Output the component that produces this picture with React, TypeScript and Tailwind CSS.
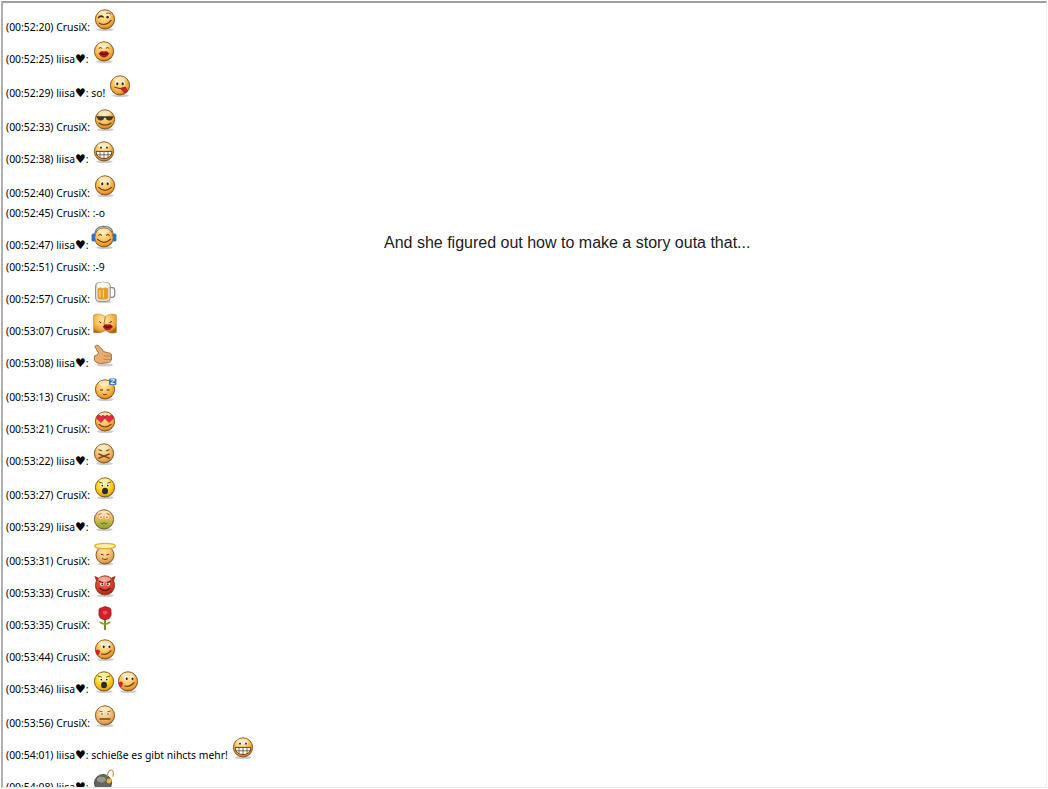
import type { ReactNode } from "react";

type Tone = "orange" | "yellow" | "red" | "sick" | "pale";

const faceFill: Record<Tone, string> = {
  orange: "url(#face-orange)",
  yellow: "url(#face-yellow)",
  red: "url(#face-red)",
  sick: "url(#face-sick)",
  pale: "url(#face-pale)",
};

function Gradients() {
  const stops: [string, string[]][] = [
    ["face-orange", ["#ffeaa8", "#fcc868", "#ec9a30", "#a5661c"]],
    ["face-yellow", ["#fff59a", "#ffdf2c", "#f2ae14", "#a06e12"]],
    ["face-red", ["#f58a70", "#e04c38", "#c52a22", "#7a1c16"]],
    ["face-pale", ["#fce2aa", "#f6c880", "#e49e52", "#a06c30"]],
  ];
  return (
    <svg className="absolute h-0 w-0" aria-hidden="true">
      <defs>
        {stops.map(([id, c]) => (
          <radialGradient key={id} id={id} cx="45%" cy="32%" r="70%">
            <stop offset="0%" stopColor={c[0]} />
            <stop offset="45%" stopColor={c[1]} />
            <stop offset="82%" stopColor={c[2]} />
            <stop offset="100%" stopColor={c[3]} />
          </radialGradient>
        ))}
        <linearGradient id="face-sick" x1="0" y1="0" x2="0" y2="1">
          <stop offset="0%" stopColor="#fbd898" />
          <stop offset="42%" stopColor="#f0b868" />
          <stop offset="64%" stopColor="#b4bc48" />
          <stop offset="100%" stopColor="#8c9a30" />
        </linearGradient>
      </defs>
    </svg>
  );
}

function Face({ tone = "orange", children }: { tone?: Tone; children?: ReactNode }) {
  return (
    <>
      <ellipse cx="11.4" cy="20.6" rx="8.4" ry="1.5" fill="#000" opacity="0.2" />
      <circle cx="11" cy="10.4" r="9.6" fill={faceFill[tone]} stroke="#7c4f18" strokeWidth="0.9" />
      <ellipse cx="10.6" cy="4.2" rx="6" ry="2.6" fill="#fff" opacity="0.42" />
      {children}
    </>
  );
}

const Eyes = () => (
  <>
    <ellipse cx="8" cy="8.2" rx="1.8" ry="2.4" fill="#fff" />
    <ellipse cx="14" cy="8.2" rx="1.8" ry="2.4" fill="#fff" />
    <ellipse cx="8.3" cy="8.7" rx="1.1" ry="1.5" fill="#3c2208" />
    <ellipse cx="13.7" cy="8.7" rx="1.1" ry="1.5" fill="#3c2208" />
  </>
);

const Smile = () => (
  <path d="M4.6 12.4Q11 18.4 17.4 12.4" fill="none" stroke="#6c3e10" strokeWidth="1.2" strokeLinecap="round" />
);

const Teeth = () => (
  <>
    <path d="M3 10.4H19Q18.4 17.4 11 17.6Q3.6 17.4 3 10.4Z" fill="#fff" stroke="#5c3410" strokeWidth="0.9" />
    <path d="M3.2 13.8H18.8M7 10.6V16.8M11 10.6V17.4M15 10.6V16.8" stroke="#5c3410" strokeWidth="0.7" fill="none" />
  </>
);

const Lips = ({ x = 11, y = 13.2, s = 1 }: { x?: number; y?: number; s?: number }) => (
  <g transform={`translate(${x} ${y}) scale(${s})`}>
    <path d="M-4.8 0Q-2.8 -3 0 -1.8Q2.8 -3 4.8 0Q2.8 3.6 0 3.4Q-2.8 3.6 -4.8 0Z" fill="#c0141e" stroke="#6c0a0e" strokeWidth="0.4" />
    <path d="M-3.6 0.1Q0 1.2 3.6 0.1" stroke="#3c0406" strokeWidth="0.9" fill="none" />
  </g>
);

const icons: Record<string, ReactNode> = {
  wink: (
    <Face>
      <path d="M4.6 8.6Q6.8 6 9.2 8" fill="none" stroke="#4a2a0c" strokeWidth="1.5" strokeLinecap="round" />
      <ellipse cx="14" cy="7.8" rx="1.9" ry="2.3" fill="#fff" />
      <ellipse cx="13.6" cy="8.2" rx="1.2" ry="1.4" fill="#3c2208" />
      <path d="M12 4.4Q14.5 3.2 17 5" fill="none" stroke="#6c3e10" strokeWidth="0.8" />
      <path d="M5.4 14.2Q11.6 17.8 17 11.4" fill="none" stroke="#6c3e10" strokeWidth="1.2" strokeLinecap="round" />
    </Face>
  ),
  kiss: (
    <Face>
      <path d="M5.8 7.4Q7.6 5.6 9.2 7.4M12.8 7.4Q14.4 5.6 16.2 7.4" fill="none" stroke="#6c3e10" strokeWidth="1" />
      <Lips y={12.6} s={1.05} />
    </Face>
  ),
  tongue: (
    <Face>
      <Eyes />
      <path d="M5.4 12.2Q11 14.8 16.6 12.4" fill="none" stroke="#6c3e10" strokeWidth="1" />
      <path d="M11.5 13.4L16.6 12.4L18.6 15.6Q17.4 18 15 17.6Z" fill="#d8202c" stroke="#8c1018" strokeWidth="0.5" />
    </Face>
  ),
  shades: (
    <Face>
      <path d="M1.6 7.2H20.4L19 8.6Q18 11.8 15 11.6Q12.2 11.4 11.6 8.8H10.4Q9.8 11.4 7 11.6Q4 11.8 3 8.6Z" fill="#3a3a34" />
      <path d="M5 14Q11 18.2 17 14" fill="none" stroke="#6c3e10" strokeWidth="1.2" strokeLinecap="round" />
    </Face>
  ),
  grin: (
    <Face>
      <ellipse cx="8" cy="6.2" rx="1.5" ry="2" fill="#fff" />
      <ellipse cx="14" cy="6.2" rx="1.5" ry="2" fill="#fff" />
      <ellipse cx="8" cy="6.6" rx="0.9" ry="1.2" fill="#3c2208" />
      <ellipse cx="14" cy="6.6" rx="0.9" ry="1.2" fill="#3c2208" />
      <Teeth />
    </Face>
  ),
  smile: (
    <Face>
      <Eyes />
      <Smile />
    </Face>
  ),
  headphones: (
    <>
      <Face>
        <path d="M5.4 8.4Q7.2 6.6 9 8.4M13 8.4Q14.8 6.6 16.6 8.4" fill="none" stroke="#4a2a0c" strokeWidth="1" />
        <Smile />
      </Face>
      <path d="M1.6 9Q1.6 -0.6 11 -0.6Q20.4 -0.6 20.4 9" fill="none" stroke="#6c7884" strokeWidth="1.2" />
      <rect x="-1.4" y="6.6" width="3.6" height="8" rx="1.6" fill="#2a72c8" />
      <rect x="19.8" y="6.6" width="3.6" height="8" rx="1.6" fill="#2a72c8" />
    </>
  ),
  beer: (
    <>
      <ellipse cx="10" cy="20.8" rx="8" ry="1.2" fill="#000" opacity="0.18" />
      <path d="M15.5 6.6H18.6Q20.8 6.8 20.8 10V13.6Q20.8 16.4 18 16.4H15.5" fill="#fff" stroke="#8c8c82" strokeWidth="1.3" />
      <rect x="1.6" y="1.6" width="14.6" height="18.8" rx="3.4" fill="#ece8da" stroke="#8c8c82" strokeWidth="1" />
      <rect x="3.6" y="6.4" width="10.6" height="12" rx="1.8" fill="#e89c20" />
      <path d="M2.4 6Q2.4 1 6 1.6Q9 0 12 1.6Q16 1.6 16 6Q13.4 8.4 11 6.6Q8.6 8.6 6.6 6.6Q4.4 8.2 2.4 6Z" fill="#fbf9ef" stroke="#aaa89a" strokeWidth="0.5" />
      <path d="M6 9V16.4M9.4 9V16.4" stroke="#fcd884" strokeWidth="1.2" />
    </>
  ),
  couple: (
    <>
      <path d="M-0.4 2Q5.4 -0.6 11.4 3.6Q16.4 -0.4 22.4 2V19.6Q16.6 21.4 11.6 17.4Q6 21 -0.4 19.6Z" fill="url(#face-orange)" stroke="#a87a30" strokeWidth="0.5" />
      <path d="M11.4 3.6Q8.6 10 11.6 17.4" stroke="#8a5c20" strokeWidth="0.8" fill="none" />
      <path d="M5.2 8.6L7.2 10M15.6 9.8L17.8 8.4" stroke="#4a2a0c" strokeWidth="1" />
      <Lips x={13.8} y={13.6} s={1} />
    </>
  ),
  thumb: (
    <>
      <ellipse cx="11.6" cy="20" rx="8.4" ry="1.6" fill="#000" opacity="0.2" />
      <path d="M1.4 11Q4.8 10.4 5.6 8L1.8 1.6Q3.2 -0.6 5.6 0.8Q8.8 3.4 10.6 6.6L16.8 8.2Q19.4 9 18.4 11.4L18.6 14Q18.2 17 15.4 17.6L7.6 18.6Q3.8 18.4 1.4 15.6Z" fill="#e8ac70" stroke="#9c6430" strokeWidth="0.9" />
      <path d="M11 11H18M10.6 14.4H18" stroke="#b07238" strokeWidth="0.7" fill="none" />
    </>
  ),
  sleep: (
    <>
      <Face>
        <path d="M6 11H9M12.6 11H15.6" stroke="#4a2a0c" strokeWidth="1" />
        <path d="M9 15.2Q11 16.2 13 15.2" fill="none" stroke="#6c3e10" strokeWidth="0.9" />
      </Face>
      <rect x="15" y="-0.6" width="7.4" height="6.6" rx="1" fill="#3a76c8" />
      <path d="M16.8 0.8H20.6L16.8 4.6H20.6" stroke="#fff" strokeWidth="1" fill="none" />
    </>
  ),
  hearts: (
    <Face>
      <path d="M7 11.6L2.8 7.6Q2 4.4 4.8 4.2Q6.4 4.2 7 5.6Q7.8 4.2 9.2 4.4Q11.6 4.8 10.8 7.6Z" fill="#e8283c" stroke="#8c1820" strokeWidth="0.5" />
      <path d="M15 11.6L11.2 7.6Q10.4 4.4 13 4.2Q14.4 4.2 15 5.6Q15.8 4.2 17.2 4.4Q19.8 4.8 19.2 7.6Z" fill="#e8283c" stroke="#8c1820" strokeWidth="0.5" />
      <path d="M5 13.4Q11 18.6 17 13.4" fill="none" stroke="#6c3e10" strokeWidth="1.2" strokeLinecap="round" />
    </Face>
  ),
  sealed: (
    <Face tone="pale">
      <path d="M5.6 6.8L9 7.8M16.4 6.8L13 7.8" stroke="#6c3e10" strokeWidth="1" />
      <path d="M5.4 10.8L16.6 15.4M16.6 10.8L5.4 15.4" stroke="#6c3e10" strokeWidth="1.4" />
    </Face>
  ),
  shocked: (
    <Face tone="yellow">
      <path d="M4.8 4.8L9 6.4M17.2 4.8L13 6.4" stroke="#7a4a10" strokeWidth="1" />
      <ellipse cx="8" cy="8.4" rx="1.9" ry="1.8" fill="#fff" />
      <ellipse cx="14" cy="8.4" rx="1.9" ry="1.8" fill="#fff" />
      <circle cx="8.3" cy="8.6" r="0.9" fill="#222" />
      <circle cx="13.7" cy="8.6" r="0.9" fill="#222" />
      <ellipse cx="11" cy="14" rx="3" ry="3.2" fill="#2c2c2c" />
    </Face>
  ),
  sick: (
    <Face tone="sick">
      <ellipse cx="8" cy="7.8" rx="1.8" ry="1.9" fill="#fff" />
      <ellipse cx="14" cy="7.8" rx="1.8" ry="1.9" fill="#fff" />
      <circle cx="8" cy="8.2" r="0.9" fill="#e06a20" />
      <circle cx="14" cy="8.2" r="0.9" fill="#e06a20" />
      <path d="M5.4 5.6L8.4 4.4M16.6 5.6L13.6 4.4" stroke="#e05a18" strokeWidth="1" />
      <path d="M8 14.8Q11 13 14 14.8" fill="none" stroke="#5c6418" strokeWidth="1" />
    </Face>
  ),
  angel: (
    <>
      <ellipse cx="11.4" cy="21" rx="8" ry="1.4" fill="#000" opacity="0.2" />
      <circle cx="11" cy="12" r="9" fill="url(#face-pale)" stroke="#7c4f18" strokeWidth="0.9" />
      <path d="M6.8 11.2L9.6 12M15.2 11.2L12.4 12" stroke="#5c3410" strokeWidth="1" />
      <path d="M8 15.6Q11 17.6 14 15.6" fill="none" stroke="#6c3e10" strokeWidth="0.9" />
      <ellipse cx="11" cy="3" rx="10.4" ry="2.6" fill="#fff2b8" stroke="#eead28" strokeWidth="1.4" />
    </>
  ),
  devil: (
    <>
      <path d="M2.6 7.6L0.4 0.8L7 4M19.4 7.6L21.6 0.8L15 4Z" fill="#b82a20" />
      <Face tone="red">
        <ellipse cx="7.8" cy="9" rx="1.9" ry="1.8" fill="#fff" />
        <ellipse cx="14.2" cy="9" rx="1.9" ry="1.8" fill="#fff" />
        <circle cx="8.2" cy="9.2" r="0.9" fill="#521" />
        <circle cx="13.8" cy="9.2" r="0.9" fill="#521" />
        <path d="M5 6.2L9.2 7.8M17 6.2L12.8 7.8" stroke="#601410" strokeWidth="1.1" />
        <path d="M5.6 13Q11 18 16.4 13" fill="none" stroke="#601410" strokeWidth="1.2" />
      </Face>
    </>
  ),
  rose: (
    <>
      <path d="M11 10V23" stroke="#7a8c20" strokeWidth="2" />
      <path d="M11 17Q6.4 13.4 5 14.8Q6.8 18 11 17.6M11 17Q15.6 13.4 17 14.8Q15.2 18 11 17.6" fill="#8aa028" />
      <path d="M5 4.4Q4.4 0.6 8 0.8Q11 -1.4 14 0.4Q17.6 0.6 17 4.6Q18 9 15.2 11.4Q11 14 6.8 11.4Q4 8.6 5 4.4Z" fill="#d41f28" stroke="#8a0e16" strokeWidth="0.6" />
      <path d="M7.6 4.4Q11 1.8 14.4 4.4Q14 8 11 8.6Q8.2 8 7.6 4.4Z" fill="#ee4c56" stroke="#981620" strokeWidth="0.6" />
    </>
  ),
  blush: (
    <Face>
      <ellipse cx="9" cy="7.2" rx="1.9" ry="2.3" fill="#fff" />
      <ellipse cx="15" cy="7.2" rx="1.9" ry="2.3" fill="#fff" />
      <ellipse cx="9.7" cy="7.8" rx="1.1" ry="1.4" fill="#3c2208" />
      <ellipse cx="15.5" cy="7.8" rx="1.1" ry="1.4" fill="#3c2208" />
      <path d="M7.6 15Q13 16.4 17 11.6" fill="none" stroke="#6c3e10" strokeWidth="1.2" strokeLinecap="round" />
      <path d="M2 11.2Q4.6 9.8 5.4 11.6Q7.2 12.4 5.2 13.6Q6.4 15.2 3.8 16L2 15Z" fill="#d8202c" />
    </Face>
  ),
  neutral: (
    <Face tone="pale">
      <path d="M5.4 6L8.8 7M16.6 6L13.2 7" stroke="#a85c20" strokeWidth="1" />
      <ellipse cx="8" cy="8.8" rx="1.6" ry="1.5" fill="#fff" />
      <ellipse cx="14" cy="8.8" rx="1.6" ry="1.5" fill="#fff" />
      <circle cx="8" cy="9" r="0.8" fill="#3c2208" />
      <circle cx="14" cy="9" r="0.8" fill="#3c2208" />
      <path d="M5.6 14H16.4" stroke="#5c3410" strokeWidth="1.3" />
    </Face>
  ),
  bomb: (
    <>
      <circle cx="10" cy="14" r="8.6" fill="#64645f" stroke="#363634" strokeWidth="0.7" />
      <ellipse cx="8.4" cy="10.6" rx="4.4" ry="2.8" fill="#a8a8a2" opacity="0.75" />
      <path d="M14 7.6Q15.4 0.4 18.6 1Q21.4 2 19.8 7.6" fill="none" stroke="#c08a38" strokeWidth="1.1" />
      <circle cx="16" cy="12" r="2.4" fill="#f4b040" />
    </>
  ),
};

function Icon({ name, className = "" }: { name: string; className?: string }) {
  return (
    <svg viewBox="0 0 22 22" className={`mb-[6px] h-[22px] w-[22px] shrink-0 overflow-visible ${className}`}>
      {icons[name]}
    </svg>
  );
}

const CRUSIX = "CrusiX";
const LIISA = "liisa";

const rows: { time: string; who: string; text?: string; icons?: string[]; h: string }[] = [
  { time: "00:52:20", who: CRUSIX, icons: ["wink"], h: "h-8" },
  { time: "00:52:25", who: LIISA, icons: ["kiss"], h: "h-8" },
  { time: "00:52:29", who: LIISA, text: "so!", icons: ["tongue"], h: "h-[34px]" },
  { time: "00:52:33", who: CRUSIX, icons: ["shades"], h: "h-[34px]" },
  { time: "00:52:38", who: LIISA, icons: ["grin"], h: "h-8" },
  { time: "00:52:40", who: CRUSIX, icons: ["smile"], h: "h-[34px]" },
  { time: "00:52:45", who: CRUSIX, text: ":-o", h: "h-5" },
  { time: "00:52:47", who: LIISA, icons: ["headphones"], h: "h-8" },
  { time: "00:52:51", who: CRUSIX, text: ":-9", h: "h-[22px]" },
  { time: "00:52:57", who: CRUSIX, icons: ["beer"], h: "h-8" },
  { time: "00:53:07", who: CRUSIX, icons: ["couple"], h: "h-8" },
  { time: "00:53:08", who: LIISA, icons: ["thumb"], h: "h-8" },
  { time: "00:53:13", who: CRUSIX, icons: ["sleep"], h: "h-[34px]" },
  { time: "00:53:21", who: CRUSIX, icons: ["hearts"], h: "h-8" },
  { time: "00:53:22", who: LIISA, icons: ["sealed"], h: "h-8" },
  { time: "00:53:27", who: CRUSIX, icons: ["shocked"], h: "h-[34px]" },
  { time: "00:53:29", who: LIISA, icons: ["sick"], h: "h-8" },
  { time: "00:53:31", who: CRUSIX, icons: ["angel"], h: "h-[34px]" },
  { time: "00:53:33", who: CRUSIX, icons: ["devil"], h: "h-8" },
  { time: "00:53:35", who: CRUSIX, icons: ["rose"], h: "h-8" },
  { time: "00:53:44", who: CRUSIX, icons: ["blush"], h: "h-8" },
  { time: "00:53:46", who: LIISA, icons: ["shocked", "blush"], h: "h-8" },
  { time: "00:53:56", who: CRUSIX, icons: ["neutral"], h: "h-[34px]" },
  { time: "00:54:01", who: LIISA, text: "schieße es gibt nihcts mehr!", icons: ["grin"], h: "h-8" },
  { time: "00:54:08", who: LIISA, icons: ["bomb"], h: "h-8" },
];

export default function App() {
  return (
    <div className="relative h-[789px] w-[1048px] overflow-hidden bg-white">
      <Gradients />
      <div className="ml-px mt-px h-[787px] w-[1046px] overflow-hidden border-b border-l-2 border-r border-t-2 border-b-[#e8e8e8] border-l-[#b0b0b0] border-r-[#eeeeee] border-t-[#a0a0a0] pl-[3px] pt-[2px] font-['Noto_Sans',sans-serif] text-[10.4px] leading-5 text-black">
        {rows.map((r) => (
          <div key={r.time} className={`flex items-end whitespace-pre ${r.h}`}>
            <span>
              ({r.time}) {r.who}
              {r.who === LIISA && <span className="font-['DejaVu_Sans',sans-serif] text-[12px]">♥</span>}:{r.text ? ` ${r.text}` : ""}
            </span>
            {r.icons?.map((name, i) => (
              <Icon key={i} name={name} className={i === 0 ? "ml-[4px]" : "ml-[2px]"} />
            ))}
          </div>
        ))}
      </div>
      <p className="absolute left-[384px] top-[234px] whitespace-nowrap font-['Liberation_Sans',sans-serif] text-base leading-[18px] text-[#1c1c1c]">
        And she figured out how to make a story outa that...
      </p>
    </div>
  );
}
